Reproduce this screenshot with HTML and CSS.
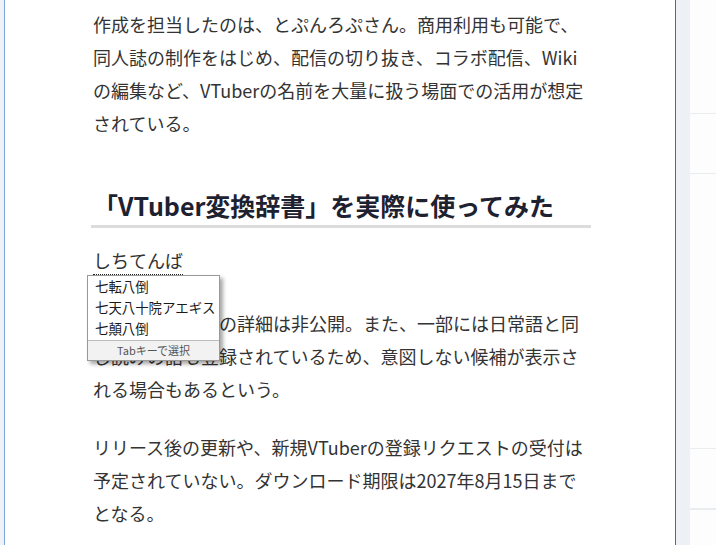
FILE: index.html
```html
<!DOCTYPE html>
<html lang="ja">
<head>
  <meta charset="UTF-8" />
  <title>VTuber変換辞書</title>
  <link rel="stylesheet" href="styles.css">
</head>
<body>
  <div class="gutter"></div>
  <main class="article">
    <p>作成を担当したのは、とぷんろぷさん。商用利用も可能で、同人誌の制作をはじめ、配信の切り抜き、コラボ配信、Wikiの編集など、VTuberの名前を大量に扱う場面での活用が想定されている。</p>

    <h2>「VTuber変換辞書」を実際に使ってみた</h2>

    <div class="ime">
      <span class="composing">しちてんば</span>
      <!-- IME candidate window -->
      <div class="candidates">
        <div class="cand">七転八倒</div>
        <div class="cand">七天八十院アエギス</div>
        <div class="cand">七顛八倒</div>
        <div class="cand-foot">Tabキーで選択</div>
      </div>
    </div>

    <p class="after-ime">収録タレント名の詳細は非公開。また、一部には日常語と同じ読みの語も登録されているため、意図しない候補が表示される場合もあるという。</p>

    <p>リリース後の更新や、新規VTuberの登録リクエストの受付は予定されていない。ダウンロード期限は2027年8月15日までとなる。</p>
  </main>
  <div class="strip"></div>
  <aside class="sidebar">
    <div class="side-block b1"></div>
    <div class="side-block b2"></div>
    <div class="side-block b3"></div>
    <div class="side-block b4"></div>
    <div class="side-block"></div>
  </aside>
</body>
</html>
```

FILE: styles.css
```css
html, body {
  margin: 0;
  height: 100%;
  overflow: hidden;
}
body {
  display: flex;
  font-family: "Noto Sans CJK JP", "Noto Sans", sans-serif;
  background: #fff;
}
.gutter {
  width: 4px;
  background: #eef2f8;
}
.article {
  width: 672px;
  box-sizing: border-box;
  border-left: 1px solid #7ea6de;
  border-right: 1px solid #4d6b90;
  background: #fff;
  padding: 8px 0 0 88px;
}
.article p {
  width: 496px;
  margin: 0;
  font-size: 18px;
  line-height: 33px;
  color: #333;
}
.article h2 {
  width: 498px;
  margin: 47px 0 0 -2px;
  padding: 0 0 2px 2px;
  font-size: 25px;
  line-height: 36px;
  font-weight: bold;
  color: #1e2130;
  border-bottom: 3px solid #dcdcdc;
}
.ime {
  position: relative;
  margin-top: 16px;
  font-size: 18px;
  line-height: 33px;
  color: #333;
}
.composing {
  border-bottom: 1px dotted #222;
  padding-bottom: 1px;
}
.candidates {
  position: absolute;
  left: -6px;
  top: 31px;
  width: 131px;
  background: #fff;
  border: 1px solid #999;
  box-shadow: 3px 3px 4px rgba(0, 0, 0, 0.35);
  z-index: 2;
}
.cand {
  height: 21px;
  line-height: 21px;
  padding-left: 7px;
  font-size: 13.4px;
  color: #1a1a1a;
  white-space: nowrap;
}
.cand-foot {
  margin-top: 1px;
  height: 19px;
  line-height: 19px;
  border-top: 1px solid #bbb;
  background: #f2f2f2;
  text-align: center;
  font-size: 11px;
  color: #555;
}
.article p.after-ime {
  margin-top: 30px;
}
.article p + p {
  margin-top: 25px;
}
.strip {
  width: 14px;
  background: #edf1f5;
}
.sidebar {
  flex: 1;
  background: #fdfdfe;
}
.side-block {
  border-bottom: 1px solid #eaedf0;
}
.b1 { height: 113px; }
.b2 { height: 59px; }
.b3 { height: 274px; }
.b4 { height: 59px; }
```
